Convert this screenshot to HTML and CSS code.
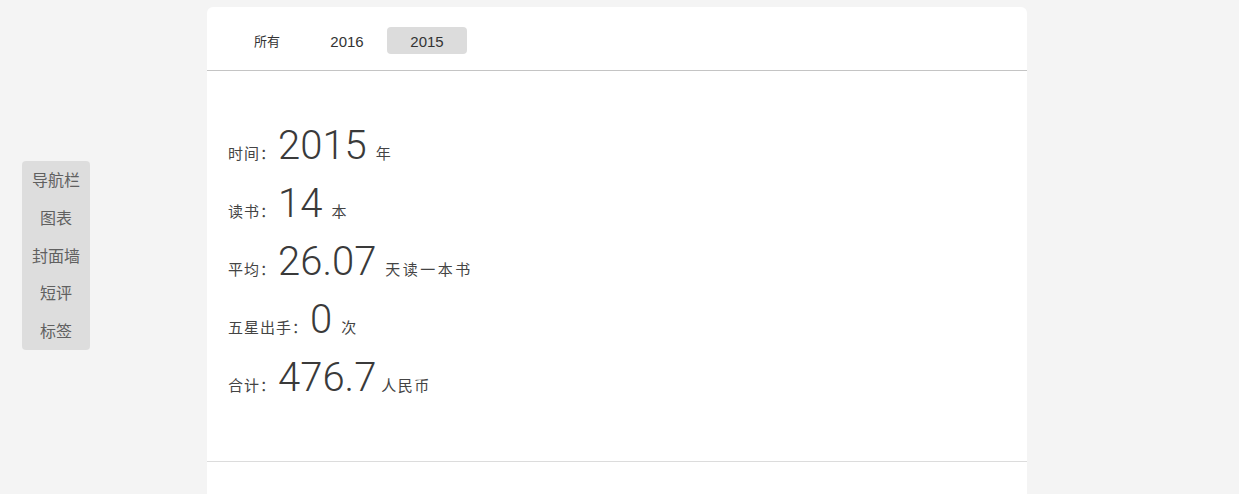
FILE: index.html
```html
<!DOCTYPE html>
<html lang="zh">
<head>
<meta charset="utf-8">
<title>读书统计</title>
<link rel="stylesheet" href="styles.css">
</head>
<body>
<nav class="sidenav">
  <a class="sidenav-item">导航栏</a>
  <a class="sidenav-item">图表</a>
  <a class="sidenav-item">封面墙</a>
  <a class="sidenav-item">短评</a>
  <a class="sidenav-item">标签</a>
</nav>
<main class="card">
  <header class="tabs">
    <span class="tab tab-cn">所有</span>
    <span class="tab">2016</span>
    <span class="tab tab-active">2015</span>
  </header>
  <section class="stats">
    <div class="row"><span class="label">时间：</span><span class="num">2015</span><span class="unit">年</span></div>
    <div class="row"><span class="label">读书：</span><span class="num">14</span><span class="unit">本</span></div>
    <div class="row"><span class="label">平均：</span><span class="num">26.07</span><span class="unit">天读一本书</span></div>
    <div class="row"><span class="label">五星出手：</span><span class="num">0</span><span class="unit">次</span></div>
    <div class="row"><span class="label">合计：</span><span class="num">476.7</span><span class="unit unit-tight">人民币</span></div>
  </section>
  <section class="more"></section>
</main>
</body>
</html>
```
FILE: styles.css
```css
html, body {
  margin: 0;
  padding: 0;
  background: #f4f4f4;
  font-family: "Liberation Sans", "Noto Sans CJK SC", sans-serif;
  color: #444;
  overflow: hidden;
}
body {
  padding: 7px 0 0 207px;
}
.sidenav {
  position: fixed;
  left: 22px;
  top: 161px;
  width: 68px;
  height: 189px;
  background: #dddddd;
  border-radius: 4px;
  display: flex;
  flex-direction: column;
  align-items: center;
}
.sidenav-item {
  display: block;
  height: 38px;
  line-height: 37px;
  font-family: "Noto Sans CJK SC", sans-serif;
  font-size: 16px;
  color: #606060;
}
.card {
  width: 820px;
  background: #fff;
  border-radius: 6px 6px 0 0;
}
.tabs {
  display: flex;
  padding: 20px 20px 16px;
  border-bottom: 1px solid #c4c4c4;
}
.tab {
  width: 80px;
  height: 27px;
  line-height: 30px;
  text-align: center;
  font-size: 15px;
  color: #333;
  border-radius: 4px;
}
.tab-cn {
  font-family: "Noto Sans CJK SC", sans-serif;
  font-size: 13px;
  line-height: 27px;
}
.tab-active {
  background: #dcdcdc;
}
.stats {
  box-sizing: border-box;
  height: 391px;
  padding: 46px 0 0 21px;
  border-bottom: 1px solid #dcdcdc;
}
.row {
  display: flex;
  align-items: baseline;
  height: 58px;
}
.label {
  font-family: "Noto Sans CJK SC", sans-serif;
  font-size: 15px;
  letter-spacing: 1px;
  color: #444;
}
.num {
  font-family: Roboto, "Liberation Sans", sans-serif;
  font-weight: 300;
  font-size: 40px;
  color: #3a3a3a;
  margin: 0 9px 0 2px;
  line-height: 58px;
}
.unit {
  font-family: "Noto Sans CJK SC", sans-serif;
  font-size: 15px;
  letter-spacing: 2.5px;
  color: #444;
}
.unit-tight {
  margin-left: -4px;
  letter-spacing: 1.5px;
}
.more {
  height: 60px;
}
```
